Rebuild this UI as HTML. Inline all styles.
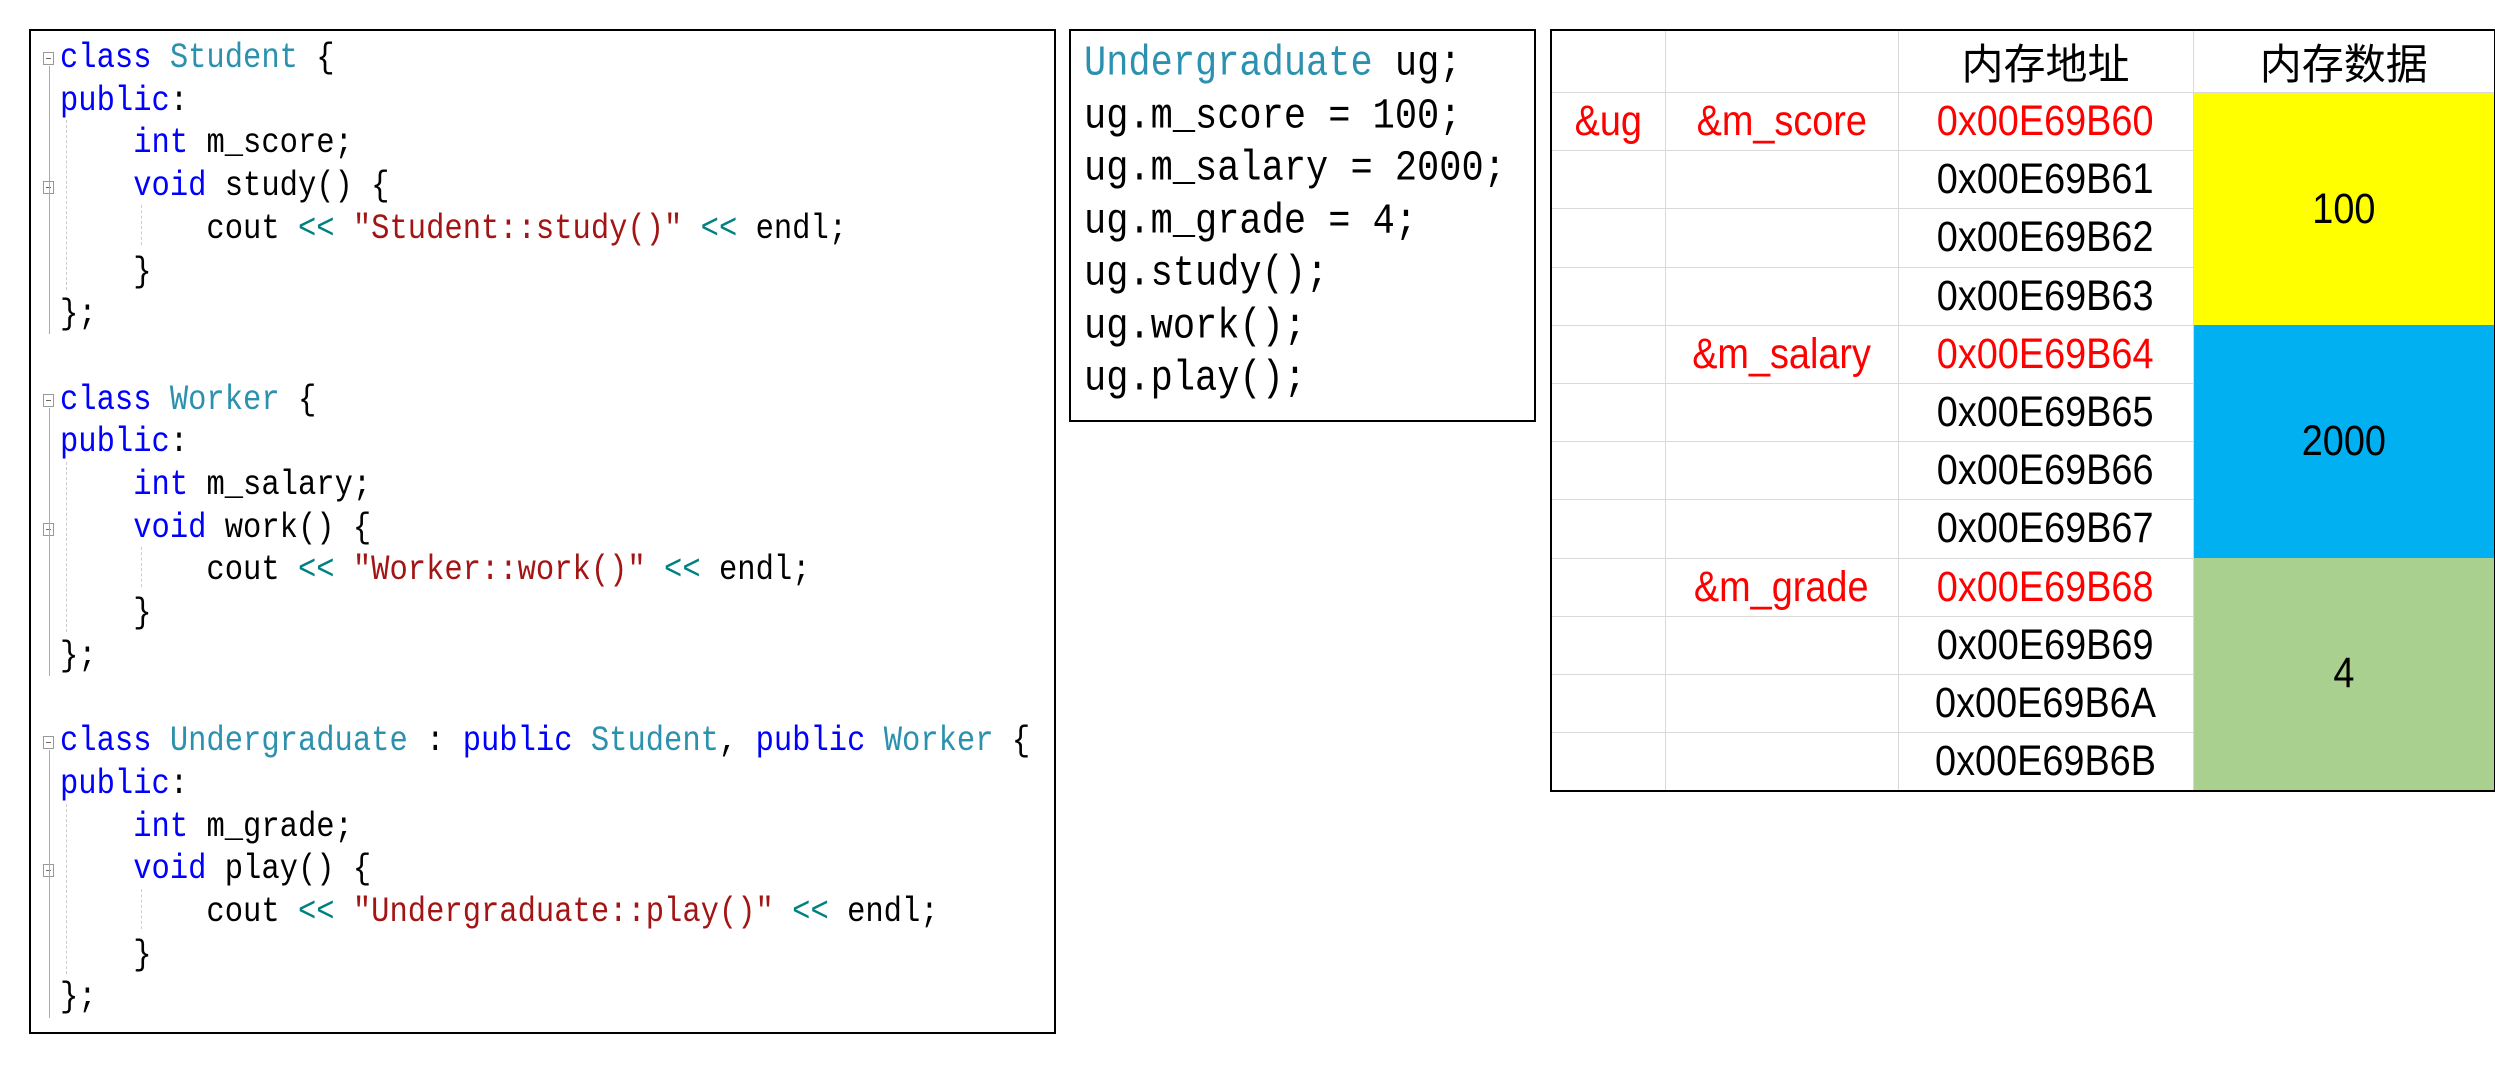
<!DOCTYPE html>
<html><head><meta charset="utf-8"><style>
*{margin:0;padding:0;box-sizing:border-box}
body{width:2495px;height:1067px;background:#fff;position:relative;overflow:hidden;font-family:"Liberation Mono",monospace}
.box{position:absolute;border:2px solid #000;background:#fff}
.code{position:absolute;white-space:pre;font-family:"Liberation Mono",monospace;color:#000}
.code div{transform:scaleY(1.15);transform-origin:center}
.k{color:#0000ff}.t{color:#2b91af}.s{color:#a31515}.o{color:#008080}
.fold{position:absolute;width:11px;height:13px;border:1px solid #999;background:#fff}
.fold:after{content:"";position:absolute;left:2px;top:5px;width:5px;height:1px;background:#666}
.vl{position:absolute;width:1px;background:#aaa}
.dl{position:absolute;width:0;border-left:1px dashed #ccc}
table{position:absolute;left:1550px;top:29px;border-collapse:collapse;border:2px solid #000;font-family:"Liberation Sans","Noto Sans CJK SC",sans-serif;table-layout:fixed;width:944px}
td{border:1px solid #d9d9d9;text-align:center;font-size:43px;height:58.2px;padding:0;vertical-align:middle;white-space:nowrap}
td span{display:inline-block;transform:scaleX(0.88)}
.r{color:#ff0000}
</style></head><body>
<div class="box" style="left:29px;top:29px;width:1027px;height:1005px"></div>
<div class="box" style="left:1069px;top:29px;width:467px;height:393px"></div>

<div class="fold" style="left:43px;top:52px"></div>
<div class="fold" style="left:43px;top:181px"></div>
<div class="fold" style="left:43px;top:394px"></div>
<div class="fold" style="left:43px;top:523px"></div>
<div class="fold" style="left:43px;top:736px"></div>
<div class="fold" style="left:43px;top:864px"></div>
<div class="vl" style="left:49px;top:66px;height:268px"></div>
<div class="vl" style="left:49px;top:408px;height:268px"></div>
<div class="vl" style="left:49px;top:750px;height:268px"></div>
<div class="dl" style="left:66px;top:120px;height:170px"></div>
<div class="dl" style="left:66px;top:462px;height:170px"></div>
<div class="dl" style="left:66px;top:804px;height:170px"></div>
<div class="dl" style="left:141px;top:205px;height:40px"></div>
<div class="dl" style="left:141px;top:547px;height:40px"></div>
<div class="dl" style="left:141px;top:889px;height:40px"></div>

<div class="code" style="left:60px;top:38px;font-size:30.5px;line-height:42.7px"><div><span class="k">class</span> <span class="t">Student</span> {</div><div><span class="k">public</span>:</div><div>    <span class="k">int</span> m_score;</div><div>    <span class="k">void</span> study() {</div><div>        cout <span class="o">&lt;&lt;</span> <span class="s">"Student::study()"</span> <span class="o">&lt;&lt;</span> endl;</div><div>    }</div><div>};</div><div> </div><div><span class="k">class</span> <span class="t">Worker</span> {</div><div><span class="k">public</span>:</div><div>    <span class="k">int</span> m_salary;</div><div>    <span class="k">void</span> work() {</div><div>        cout <span class="o">&lt;&lt;</span> <span class="s">"Worker::work()"</span> <span class="o">&lt;&lt;</span> endl;</div><div>    }</div><div>};</div><div> </div><div><span class="k">class</span> <span class="t">Undergraduate</span> : <span class="k">public</span> <span class="t">Student</span>, <span class="k">public</span> <span class="t">Worker</span> {</div><div><span class="k">public</span>:</div><div>    <span class="k">int</span> m_grade;</div><div>    <span class="k">void</span> play() {</div><div>        cout <span class="o">&lt;&lt;</span> <span class="s">"Undergraduate::play()"</span> <span class="o">&lt;&lt;</span> endl;</div><div>    }</div><div>};</div></div>

<div class="code" style="left:1084px;top:38px;font-size:37px;line-height:52.5px"><div><span class="t">Undergraduate</span> ug;</div><div>ug.m_score = 100;</div><div>ug.m_salary = 2000;</div><div>ug.m_grade = 4;</div><div>ug.study();</div><div>ug.work();</div><div>ug.play();</div></div>

<table>
<colgroup><col style="width:114px"><col style="width:233px"><col style="width:295px"><col style="width:302px"></colgroup>
<tr><td style="height:58px"></td><td></td><td style="font-size:42px">内存地址</td><td style="font-size:42px">内存数据</td></tr>
<tr><td class="r"><span>&amp;ug</span></td><td class="r"><span>&amp;m_score</span></td><td class="r"><span>0x00E69B60</span></td><td rowspan="4" style="background:#ffff00;border:none"><span>100</span></td></tr>
<tr><td></td><td></td><td><span>0x00E69B61</span></td></tr>
<tr><td></td><td></td><td><span>0x00E69B62</span></td></tr>
<tr><td></td><td></td><td><span>0x00E69B63</span></td></tr>
<tr><td></td><td class="r"><span>&amp;m_salary</span></td><td class="r"><span>0x00E69B64</span></td><td rowspan="4" style="background:#00b0f0;border:none"><span>2000</span></td></tr>
<tr><td></td><td></td><td><span>0x00E69B65</span></td></tr>
<tr><td></td><td></td><td><span>0x00E69B66</span></td></tr>
<tr><td></td><td></td><td><span>0x00E69B67</span></td></tr>
<tr><td></td><td class="r"><span>&amp;m_grade</span></td><td class="r"><span>0x00E69B68</span></td><td rowspan="4" style="background:#a9d08e;border:none"><span>4</span></td></tr>
<tr><td></td><td></td><td><span>0x00E69B69</span></td></tr>
<tr><td></td><td></td><td><span>0x00E69B6A</span></td></tr>
<tr><td></td><td></td><td><span>0x00E69B6B</span></td></tr>
</table>
</body></html>
